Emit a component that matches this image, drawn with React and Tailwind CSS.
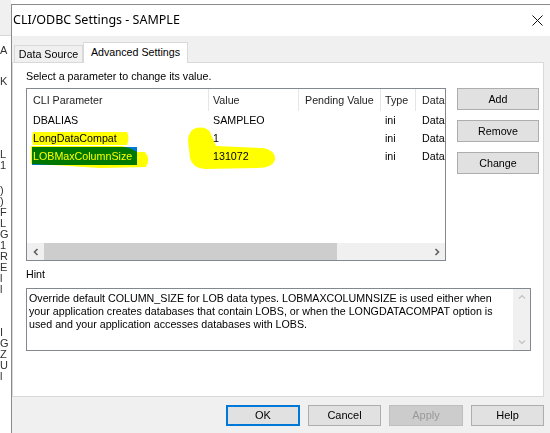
import React from 'react';

const font = { fontFamily: '"Liberation Sans", Arial, sans-serif' };

const sideChars = [
  { y: 'mt-[9px]', c: 'A' },
  { y: 'mt-[20px]', c: 'K' },
  { y: 'mt-[62px]', c: 'L' },
  { y: 'mt-0', c: '1' },
  { y: 'mt-[14px]', c: ')' },
  { y: 'mt-0', c: ')' },
  { y: 'mt-0', c: 'F' },
  { y: 'mt-0', c: 'L' },
  { y: 'mt-0', c: 'G' },
  { y: 'mt-0', c: '1' },
  { y: 'mt-0', c: 'R' },
  { y: 'mt-0', c: 'E' },
  { y: 'mt-0', c: 'l' },
  { y: 'mt-0', c: 'l' },
  { y: 'mt-[32px]', c: 'I' },
  { y: 'mt-0', c: 'G' },
  { y: 'mt-0', c: 'Z' },
  { y: 'mt-0', c: 'U' },
  { y: 'mt-0', c: 'l' },
];

const rows = [
  { name: 'DBALIAS', value: 'SAMPLEO' },
  { name: 'LongDataCompat', value: '1' },
  { name: 'LOBMaxColumnSize', value: '131072', selected: true },
];

const Chevron = ({ dir, color }) => (
  <svg width="8" height="8" viewBox="0 0 8 8">
    {dir === 'left' && <path d="M5.5 1 L2.5 4 L5.5 7" fill="none" stroke={color} strokeWidth="1.6" />}
    {dir === 'right' && <path d="M2.5 1 L5.5 4 L2.5 7" fill="none" stroke={color} strokeWidth="1.6" />}
    {dir === 'up' && <path d="M1 5.5 L4 2.5 L7 5.5" fill="none" stroke={color} strokeWidth="1.2" />}
    {dir === 'down' && <path d="M1 2.5 L4 5.5 L7 2.5" fill="none" stroke={color} strokeWidth="1.2" />}
  </svg>
);

const SideButton = ({ children }) => (
  <button className="w-[82px] h-[22px] bg-[#e1e1e1] border border-[#adadad] text-[10.7px] text-black">
    {children}
  </button>
);

const App = () => {
  return (
    <div className="relative w-[550px] h-[433px] flex bg-white overflow-hidden text-black" style={font}>
      {/* window behind the dialog */}
      <div className="w-[11px] flex flex-col overflow-hidden">
        <div className="h-[36px] bg-[#f0f0f0] border-b border-[#d8d8d8]" />
        <div className="flex flex-col text-[11px] leading-[11px] text-[#333]">
          {sideChars.map((s, i) => (
            <span key={i} className={`h-[11px] ${s.y}`}>{s.c}</span>
          ))}
        </div>
      </div>

      {/* dialog */}
      <div className="flex-1 flex flex-col mt-[4px] border-t border-l border-[#8a8a8a]">
        <div className="h-[31px] bg-white flex items-center justify-between pl-[1px] pr-[7px]">
          <span className="text-[12.5px]" style={{ fontFamily: '"Noto Sans", sans-serif' }}>CLI/ODBC Settings - SAMPLE</span>
          <svg width="11" height="11" viewBox="0 0 11 11">
            <path d="M0.5 0.5 L10.5 10.5 M10.5 0.5 L0.5 10.5" stroke="#111" strokeWidth="1" />
          </svg>
        </div>

        <div className="flex-1 bg-[#f0f0f0] pt-[6px] pr-[6px] flex flex-col">
          {/* tabs */}
          <div className="h-[20px] flex items-end pl-[2px] text-[10.7px]">
            <div className="h-[17px] w-[69px] bg-[#f0f0f0] border border-b-0 border-[#d9d9d9] flex items-center justify-center">
              Data Source
            </div>
            <div className="relative z-10 -mb-px h-[21px] w-[105px] bg-white border border-b-0 border-[#d9d9d9] flex items-center justify-center pb-[1px]">
              Advanced Settings
            </div>
          </div>

          {/* tab panel */}
          <div className="h-[335px] bg-white border border-[#d9d9d9] pl-[13px] pt-[7px] text-[10.7px] leading-[13px]">
            <div>Select a parameter to change its value.</div>

            <div className="flex mt-[5px]">
              {/* list view */}
              <div className="w-[420px] h-[173px] border border-[#828790] flex flex-col">
                <div className="flex-1 overflow-hidden">
                  <div className="h-[22px] flex items-center text-[#1e1e1e]">
                    <div className="w-[182px] h-full pl-[6px] flex items-center border-r border-[#e5e5e5]">CLI Parameter</div>
                    <div className="w-[90px] h-full pl-[4px] flex items-center border-r border-[#e5e5e5]">Value</div>
                    <div className="w-[82px] h-full pl-[6px] flex items-center border-r border-[#e5e5e5]">Pending Value</div>
                    <div className="w-[35px] h-full pl-[4px] flex items-center border-r border-[#e5e5e5]">Type</div>
                    <div className="flex-1 h-full pl-[6px] flex items-center overflow-hidden">Data</div>
                  </div>
                  {rows.map((r) => (
                    <div key={r.name} className="h-[18px] flex items-center">
                      <div className="w-[182px] h-full pl-[5px] flex items-center">
                        <span
                          className={
                            r.selected
                              ? 'h-full w-[105px] pl-[1px] flex items-center bg-[#0078d7] text-white'
                              : 'pl-[1px]'
                          }
                        >
                          {r.name}
                        </span>
                      </div>
                      <div className="w-[90px] pl-[4px]">{r.value}</div>
                      <div className="w-[82px]" />
                      <div className="w-[35px] pl-[4px]">ini</div>
                      <div className="flex-1 pl-[6px] overflow-hidden whitespace-nowrap">Data</div>
                    </div>
                  ))}
                </div>
                {/* horizontal scrollbar */}
                <div className="h-[17px] flex bg-[#f0f0f0]">
                  <div className="w-[17px] flex items-center justify-center">
                    <Chevron dir="left" color="#606060" />
                  </div>
                  <div className="flex-1 flex">
                    <div className="w-[293px] bg-[#cdcdcd]" />
                  </div>
                  <div className="w-[17px] flex items-center justify-center">
                    <Chevron dir="right" color="#606060" />
                  </div>
                </div>
              </div>

              {/* side buttons */}
              <div className="ml-[11px] flex flex-col gap-[10px]">
                <SideButton>Add</SideButton>
                <SideButton>Remove</SideButton>
                <SideButton>Change</SideButton>
              </div>
            </div>

            <div className="mt-[7px]">Hint</div>

            <div className="mt-[7px] w-[505px] h-[63px] border border-[#828790] flex">
              <div className="flex-1 pl-[2px] pt-[3px] whitespace-nowrap overflow-hidden">
                <div>Override default COLUMN_SIZE for LOB data types. LOBMAXCOLUMNSIZE is used either when</div>
                <div>your application creates databases that contain LOBS, or when the LONGDATACOMPAT option is</div>
                <div>used and your application accesses databases with LOBS.</div>
              </div>
              <div className="w-[17px] bg-[#f0f0f0] flex flex-col justify-between items-center py-[4px]">
                <Chevron dir="up" color="#c2c2c2" />
                <Chevron dir="down" color="#c2c2c2" />
              </div>
            </div>
          </div>

          {/* dialog buttons */}
          <div className="mt-[8px] flex justify-end gap-[8px] text-[11px]">
            <button className="w-[74px] h-[21px] bg-[#e1e1e1] border-2 border-[#0078d7]">OK</button>
            <button className="w-[73px] h-[21px] bg-[#e1e1e1] border border-[#adadad]">Cancel</button>
            <button className="w-[74px] h-[21px] bg-[#cccccc] border border-[#bfbfbf] text-[#999999]">Apply</button>
            <button className="w-[73px] h-[21px] bg-[#e1e1e1] border border-[#adadad]">Help</button>
          </div>
        </div>
      </div>

      {/* highlighter marks drawn over the list */}
      <svg className="absolute inset-0 pointer-events-none mix-blend-multiply" width="550" height="433">
        <path d="M33 132 L127 132 Q130 138 127 145 L33 145 Q31 138 33 132 Z" fill="#ffff00" />
        <path d="M31 146 L122 146 Q131 148 137 152 L145 152 Q151 159 146 167 L100 168 Q60 165 31 164 Z" fill="#ffff00" />
        <path d="M196 128 Q206 126 210 132 L216 146 L262 148 Q276 150 275 160 Q272 168 258 168 L205 169 Q192 168 190 158 L188 140 Q189 130 196 128 Z" fill="#ffff00" />
      </svg>
    </div>
  );
};

export default App;
